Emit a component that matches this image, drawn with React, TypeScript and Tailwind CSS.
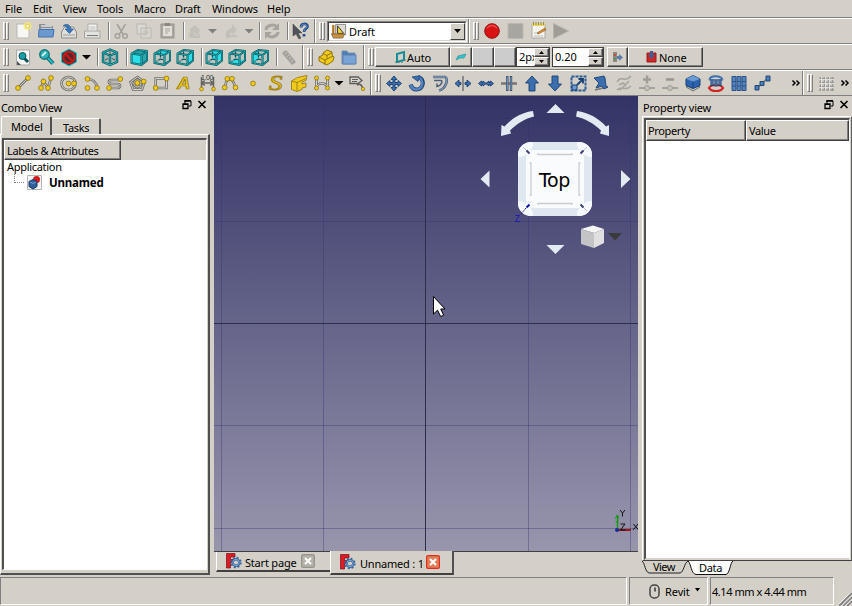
import type { ReactNode } from "react";

const YEL = "#f0cb1e";
const YEL_D = "#8f740c";
const BLUE = "#3d6fae";
const BLUE_D = "#173f72";
const TEAL = "#22c3cb";
const TEAL_D = "#0b5258";

/* ---------- toolbar primitives ---------- */

function Toolbar({ children }: { children: ReactNode }) {
  return (
    <div className="flex h-[26px] shrink-0 items-stretch border-t border-b border-t-white border-b-[#808080]">
      {children}
    </div>
  );
}

function Grip({ width = "w-[12px]" }: { width?: string }) {
  return (
    <div className={`flex ${width} shrink-0 items-center pl-[3px]`}>
      <span className="h-[18px] w-[3px] shrink-0 border border-t-white border-r-[#808080] border-b-[#808080] border-l-white" />
      <span className="h-[18px] w-[3px] shrink-0 border border-t-white border-r-[#808080] border-b-[#808080] border-l-white" />
    </div>
  );
}

function Break({ className = "" }: { className?: string }) {
  return <div className={`w-[2px] shrink-0 border-l border-l-[#808080] bg-white ${className}`} />;
}

function Sep() {
  return (
    <div className="flex w-[6px] shrink-0 items-center justify-end">
      <span className="h-[18px] w-[2px] border-l border-l-[#808080] bg-white" />
    </div>
  );
}

function Icon({ children, width = 23 }: { children: ReactNode; width?: number }) {
  return (
    <svg className="shrink-0" width={width} height="24" viewBox={`0 0 ${width} 24`} fill="none">
      {children}
    </svg>
  );
}

function Drop({ width, color = "#000" }: { width: number; color?: string }) {
  return (
    <svg className="shrink-0" width={width} height="24" viewBox={`0 0 ${width} 24`}>
      <path d={`M${width / 2 - 4.5} 10h9l-4.5 4.5z`} fill={color} />
    </svg>
  );
}

/* Yellow nodes joined by a grey outlined stroke, used by all the Draft tools */
function Nodes({ d, pts, width = 23, r = 2.4 }: { d?: string; pts: number[][]; width?: number; r?: number }) {
  return (
    <Icon width={width}>
      {d && <path d={d} stroke="#6f6f6c" strokeWidth="2.6" />}
      {d && <path d={d} stroke="#d2d0ca" strokeWidth="1" />}
      {pts.map(([x, y]) => (
        <circle key={`${x}-${y}`} cx={x} cy={y} r={r} fill={YEL} stroke={YEL_D} strokeWidth="0.8" />
      ))}
    </Icon>
  );
}

function CubeIcon({ face }: { face: "axo" | "front" | "top" | "right" | "rear" | "bottom" | "left" }) {
  if (face === "axo") {
    const edges = "M11 4.500l7 3v9.500l-7 3-7-3V7.500zM4 7.500l7 3 7-3M11 10.500V20";
    return (
      <Icon>
        <path d={edges} fill="#a9bab8" stroke={TEAL_D} strokeWidth="2.4" strokeLinejoin="round" />
        <path d={edges} stroke={TEAL} strokeWidth="0.900" />
        <path d="M11 6v5M6 15l3-1.500M16 15l-3-1.500" stroke="#3c4f50" strokeWidth="1" />
      </Icon>
    );
  }
  const front = "M3.500 8.500l10 1.500v10L3.500 18z";
  const top = "M3.500 8.500l6-3.500 9.500 1-5.500 4z";
  const right = "M13.500 10l5.500-4v9.500l-5.500 4.500z";
  const rear = "M9.500 5l9.500 1v9.500L9.500 14z";
  const bottom = "M3.500 18l6-4 9.500 1.500-5.500 4.500z";
  const left = "M3.500 8.500l6-3.500v9l-6 4z";
  const fill = { front, top, right, rear, bottom, left }[face];
  const edges = "M3.500 8.500l6-3.500 9.500 1v9.500L13.500 20l-10-2zM3.500 8.500l10 1.500v10M13.500 10l5.500-4";
  return (
    <Icon>
      <path d="M3.500 8.500l6-3.500 9.500 1v9.500L13.500 20l-10-2z" fill={face === "front" ? "#28a9b0" : "#b9c6c2"} />
      <path d={fill} fill="#2ce0ea" />
      {face !== "front" && <path d="M9.500 6.500v7.500M9.500 14l-4 2.500M9.500 14l4 1" stroke={TEAL_D} strokeWidth="1.200" strokeDasharray="2.500 1" />}
      <path d={edges} stroke={TEAL_D} strokeWidth="2" strokeLinejoin="round" />
      <path d={edges} stroke={TEAL} strokeWidth="0.700" strokeLinejoin="round" />
    </Icon>
  );
}

function Blue({ d, stroke }: { d: string; stroke?: string }) {
  return (
    <Icon>
      {stroke && <path d={stroke} stroke="#77777a" strokeWidth="1.6" />}
      <path d={d} fill={BLUE} stroke={BLUE_D} strokeWidth="0.9" strokeLinejoin="round" />
    </Icon>
  );
}

function Chevrons() {
  return (
    <svg width="10" height="24" viewBox="0 0 10 24" fill="none" className="shrink-0">
      <path d="M1.500 9.500l2.500 2.500-2.500 2.500M5.500 9.500L8 12l-2.500 2.500" stroke="#000" strokeWidth="1.500" />
    </svg>
  );
}

/* ---------- rows ---------- */

function MenuBar() {
  const items: [string, string][] = [
    ["File", "w-[28px]"], ["Edit", "w-[30px]"], ["View", "w-[34px]"], ["Tools", "w-[37px]"],
    ["Macro", "w-[41px]"], ["Draft", "w-[37px]"], ["Windows", "w-[55px]"], ["Help", "w-[30px]"],
  ];
  return (
    <div className="flex h-[18px] shrink-0 items-center border-b border-b-[#808080] pl-[5px] tracking-[-0.15px]">
      {items.map(([t, w]) => <span key={t} className={`${w} whitespace-nowrap`}>{t}</span>)}
    </div>
  );
}

function FileBar() {
  return (
    <Toolbar>
      <Grip />
      <Icon>
        <path d="M5 5h12v14H5z" fill="#f7f7f5" stroke="#b9b9b4" />
        <circle cx="15.500" cy="7" r="4" fill="#f6e878" opacity="0.8" /><circle cx="15.500" cy="7" r="1.800" fill="#fff" stroke="#e5c93a" />
      </Icon>
      <Icon>
        <path d="M4 5h6l1 2h7v10H4z" fill="#8c8f92" /><path d="M6 6h11v6H6z" fill="#c9cdd0" /><path d="M6 8.500h11" stroke="#8c8f92" />
        <path d="M3.500 18l.5-7.500h15l-1 7.500z" fill="#6b9ad0" stroke="#4273ad" />
      </Icon>
      <Icon>
        <path d="M3.500 13l3-5h9l3 5v6h-15z" fill="#dfdfdc" stroke="#8a8a88" /><path d="M5 16h12" stroke="#9b9b99" />
        <path d="M5 7c3-3 7-2 8 3h2.500l-4 4.500L7 10h2.500C9 7.500 7 6.500 5 7z" fill="#3b76b8" stroke="#285a94" strokeWidth="0.600" />
      </Icon>
      <Icon>
        <path d="M7 5h9v8H7z" fill="#f4f4f2" stroke="#aaa" /><path d="M8.500 8h6M8.500 10h6" stroke="#bbb" />
        <path d="M3.500 12h15.500v7H3.500z" fill="#e2e2df" stroke="#a5a5a1" /><path d="M6 16.500h11" stroke="#777" />
      </Icon>
      <Sep />
      <Icon>
        <g stroke="#a3a19c" strokeWidth="1.500"><path d="M7 5l6 10M15.500 5L9.500 15" /><circle cx="7.500" cy="17" r="2.300" /><circle cx="15" cy="17" r="2.300" /></g>
      </Icon>
      <Icon><g fill="#dad8d2" stroke="#b9b6af"><path d="M4 5h9v10H4zM8 9h10v10H8z" /></g><path d="M10 12h6M10 14h6M10 16h5" stroke="#bfbcb5" /></Icon>
      <Icon>
        <path d="M5 5h13v14H5z" fill="#aaa79f" stroke="#98958e" /><path d="M7 7h9v10H7z" fill="#e0ded8" /><path d="M9 4h5v3H9z" fill="#88867f" />
        <path d="M9 10h5M9 12h5M9 14h3" stroke="#aaa79f" />
      </Icon>
      <Sep />
      <Icon width={20}><path d="M4 17c1-5 2-5 1-7l5-4 6 6-3 1c2 2 2 4 2 6H5z" fill="#c3c0b9" /><path d="M9 14l4 3" stroke="#d8d5ce" /></Icon>
      <Drop width={15} color="#808080" />
      <Icon><path d="M6 19c-1-6 1-9 6-10V5l5 6-5 5v-3c-2 1-3 3-2 6z" fill="#c3c0b9" /><path d="M6 17h11" stroke="#c3c0b9" strokeWidth="2" /></Icon>
      <Drop width={12} color="#808080" />
      <Sep />
      <Icon width={22}>
        <path d="M5 11c0-4 7-7 11-3M17 13c0 4-7 7-11 3" stroke="#a7a49d" strokeWidth="3" /><path d="M18 4v7h-7zM4 20v-7h7z" fill="#a7a49d" />
      </Icon>
      <Sep />
      <Icon width={25}>
        <path d="M4 5v12l3-2 3 5 2-1-3-5h4z" fill="#50545a" stroke="#3c3f43" strokeWidth="0.500" />
        <path d="M12 8.500c0-5 7-4.500 6.500-1 0 2.500-3.500 2-3.500 5.500M15 15v2.500" stroke="#204a87" strokeWidth="2.700" />
        <path d="M12 8.500c0-4.500 6.300-4 6-1 0 2.500-3 2-3 5" stroke="#7fa4d3" strokeWidth="0.800" />
      </Icon>
      <Break />
      <Grip width="w-[11px]" />
      <div className="flex h-[21px] w-[140px] shrink-0 items-center self-center border border-t-[#808080] border-r-white border-b-white border-l-[#808080] bg-white">
        <div className="flex h-full w-full items-center border border-t-[#404040] border-r-[#d4d0c8] border-b-[#d4d0c8] border-l-[#404040]">
          <svg width="19" height="17" viewBox="0 0 19 18" className="shrink-0">
            <path d="M6.500 1.500h10.500v11h-10.500z" fill="#dedbd5" stroke="#888" /><path d="M8.500 11V3l6.500 8z" fill="#f2d632" stroke="#333" />
            <path d="M4 2v11" stroke="#b77822" strokeWidth="2.500" /><path d="M2 11.500h14l-2 4.500H4z" fill="#c69045" stroke="#73532a" strokeWidth="0.700" />
          </svg>
          <span className="flex-1 pl-[1px] tracking-[-0.1px]">Draft</span>
          <span className="flex h-[17px] w-[15px] items-center justify-center border border-t-white border-r-[#404040] border-b-[#404040] border-l-white bg-[#d4d0c8]">
            <svg width="7" height="4" viewBox="0 0 7 4"><path d="M0 0h7L3.500 4z" /></svg>
          </span>
        </div>
      </div>
      <Break className="ml-px" />
      <Grip width="w-[11px]" />
      <Icon><circle cx="11" cy="12" r="7.300" fill="#d81414" stroke="#8e1111" /><path d="M6 9.500c2-4 8-4 10 0" stroke="#ef4545" strokeWidth="1.500" /></Icon>
      <Icon><path d="M4 4.500h15v15H4z" fill="#a8a6a1" stroke="#bab7b0" /></Icon>
      <Icon>
        <path d="M5 5h13v14H5z" fill="#f5f4ee" stroke="#aaa" /><path d="M5 4h13v3H5z" fill="#ead55c" /><path d="M6.500 3v3M9 3v3M11.500 3v3M14 3v3M16.500 3v3" stroke="#777" strokeWidth="0.800" />
        <path d="M7 14h6M7 17h9" stroke="#bbb" /><path d="M10 14l8-5 1 2-8 4z" fill="#e29131" stroke="#86521b" strokeWidth="0.600" />
      </Icon>
      <Icon><path d="M3.500 4.500l15 7.500-15 7.500z" fill="#a09d97" stroke="#b5b2ab" /></Icon>
    </Toolbar>
  );
}

const raised = "border border-t-white border-l-white border-r-[#404040] border-b-[#404040] shadow-[inset_-1px_-1px_0_#808080]";

function Spin({ value, width, text }: { value: string; width: string; text: string }) {
  return (
    <div className={`flex h-[20px] ${width} shrink-0 self-center border border-[#404040] bg-white`}>
      <span className={`${text} shrink-0 overflow-hidden whitespace-nowrap pl-[2px] leading-[18px] tracking-normal`}>{value}</span>
      <span className="flex flex-1 flex-col bg-[#d4d0c8]">
        {["M0 3h5L2.500 0z", "M0 0h5L2.500 3z"].map((d) => (
          <span key={d} className={`flex flex-1 items-center justify-center ${raised}`}>
            <svg width="5" height="3" viewBox="0 0 5 3"><path d={d} /></svg>
          </span>
        ))}
      </span>
    </div>
  );
}

function ViewBar() {
  return (
    <Toolbar>
      <Grip />
      <Icon>
        <path d="M4.500 5h13v15h-13z" fill="#f6f6f4" stroke="#aaa" /><path d="M5 16l4 4H5z" fill="#555" />
        <path d="M12 13l4 4" stroke={TEAL_D} strokeWidth="3" /><circle cx="10.500" cy="11" r="3.500" fill="#1a9fa8" stroke={TEAL_D} />
      </Icon>
      <Icon>
        <path d="M12 12l6 6.500" stroke={TEAL_D} strokeWidth="4" /><path d="M12 12l6 6.500" stroke={TEAL} strokeWidth="2" />
        <circle cx="9.500" cy="9.500" r="4.700" fill="#2bb0b8" stroke="#14767d" strokeWidth="1.500" /><path d="M7 11l4-4" stroke="#d8f2f2" strokeWidth="1.800" />
      </Icon>
      <Icon>
        <path d="M11 4l7.500 4v9l-7.500 4-7.500-4V8z" fill={TEAL_D} stroke={TEAL} strokeWidth="0.900" />
        <circle cx="11" cy="12.500" r="5.600" stroke="#c81818" strokeWidth="2.200" fill="#55292b" /><path d="M7 8.500l8 8" stroke="#c81818" strokeWidth="2.400" />
      </Icon>
      <Drop width={11} />
      <div className="w-px" />
      <Sep />
      <CubeIcon face="axo" />
      <Sep />
      <CubeIcon face="front" /><CubeIcon face="top" /><CubeIcon face="right" />
      <Sep />
      <CubeIcon face="rear" /><CubeIcon face="bottom" /><CubeIcon face="left" />
      <Sep />
      <Icon><path d="M4 8l4-3 10 12-4 3z" fill="#a09e99" stroke="#bab7b0" /><path d="M7 9l2-1.500M9 11.500l2-1.500M11 14l2-1.500M13 16.500l2-1.500" stroke="#d4d0c8" /></Icon>
      <Break className="ml-px" />
      <Grip width="w-[11px]" />
      <Icon>
        <path d="M4 12l4-2V8l4-3 5 2v3l2 2-1 4-6 4-8-4z" fill={YEL} stroke={YEL_D} /><path d="M4 12l6 3 8-4M10 15v5M8 8.500l4 2 5-3M12 10.500v3" stroke={YEL_D} />
      </Icon>
      <Icon><path d="M4 6h5l1 2h7v11H4z" fill="#4d7db7" stroke="#7490b2" /><path d="M5 10h13v9H5z" fill="#79a3d5" stroke="#5c83b3" /></Icon>
      <Break className="ml-[2px]" />
      <Grip width="w-[10px]" />
      <div className={`flex h-[20px] w-[75px] shrink-0 self-center ${raised} items-center pl-[18px] tracking-[-0.1px]`}>
        <svg width="13" height="14" viewBox="0 0 13 14" fill="none"><path d="M3 4l7-2v8l-7 2z" stroke="#148f98" strokeWidth="2" /><path d="M1 12h8M11 9v3" stroke="#577" strokeDasharray="2 1" /></svg>
        Auto
      </div>
      <div className={`flex h-[20px] w-[22px] shrink-0 items-center justify-center self-center ${raised}`}>
        <svg width="12" height="8" viewBox="0 0 12 8"><path d="M1 7l2-4 8-2-2 4-4 0z" fill="#35c3cd" stroke="#26959e" strokeWidth="0.700" /></svg>
      </div>
      <div className={`h-[20px] w-[22px] shrink-0 self-center bg-[#cccccc] ${raised}`} />
      <div className={`h-[20px] w-[22px] shrink-0 self-center bg-[#cccccc] ${raised}`} />
      <Spin value="2px" width="w-[34px]" text="w-[17px]" />
      <div className="w-[2px]" />
      <Spin value="0.20" width="w-[52px]" text="w-[35px]" />
      <div className="w-[3px]" />
      <div className={`flex h-[20px] w-[21px] shrink-0 items-center justify-center self-center ${raised}`}>
        <svg width="12" height="12" viewBox="0 0 12 12"><path d="M1 1h4v10H1z" fill="#8b8882" /><path d="M2 3h2v2H2z" fill="#c94d3a" /><path d="M2 7h2v2H2z" fill="#5a9450" /><path d="M5 5h2V3l4 3.500L7 10V8H5z" fill="#5c7ea8" /></svg>
      </div>
      <div className={`flex h-[20px] w-[75px] shrink-0 self-center ${raised} items-center pl-[17px] tracking-[-0.1px]`}>
        <svg width="11" height="12" viewBox="0 0 11 12" className="mr-[2px]"><path d="M1 2h9v9H1z" fill="#d12626" stroke="#9b1919" /><path d="M4 0h3v4h2L5.500 8 2 4h2z" fill="#3e5f96" /></svg>
        None
      </div>
    </Toolbar>
  );
}

function DraftBar() {
  return (
    <Toolbar>
      <Grip />
      <Nodes d="M6 17L16 7" pts={[[6, 17], [16, 7]]} />
      <Nodes d="M6 17L8.500 10 13 17 16 7" pts={[[6, 17], [8.5, 10.5], [13, 17], [16, 7]]} />
      <Nodes d="M17.500 12.500a7 6.500 0 1 0-14 0a7 6.500 0 1 0 14 0" pts={[[10.5, 12.5], [16, 12.5]]} />
      <Nodes d="M6.500 8c5 0 9 3 9.500 9" pts={[[6.5, 8], [6.5, 17], [16, 17]]} />
      <Nodes d="M5 17h8c4 0 4-4 1-4H8c-4 0-4-4-1-4h9" pts={[[16.3, 8], [5, 17]]} />
      <Nodes d="M10.500 6l7 5-2.500 7.500H6L3.500 11z M10.500 9a3.500 3.500 0 1 1-.1 0" pts={[[10.3, 12], [16.7, 10.5]]} />
      <Nodes d="M5.700 7.500H16.500V17H5.700z" pts={[[16.5, 7.5], [5.7, 17]]} />
      <Icon>
        <text x="4" y="18" fontSize="16" textLength="13" lengthAdjust="spacingAndGlyphs" fontWeight="bold" fontStyle="italic" fill={YEL} stroke={YEL_D} strokeWidth="0.700" className="font-['Liberation_Sans',sans-serif]">A</text>
      </Icon>
      <Icon>
        <path d="M5.500 6v12M17.500 6v12M5 12h13M9 9.500L5.500 12 9 14.500M14 9.500l3.500 2.500-3.500 2.500" stroke="#666663" strokeWidth="1.500" />
        <text x="5" y="9" fontSize="7" textLength="12" fill="#333" className="font-['Liberation_Sans',sans-serif]">1.00</text>
        <circle cx="5.500" cy="18" r="1.900" fill={YEL} stroke={YEL_D} strokeWidth="0.700" /><circle cx="17.500" cy="18" r="1.900" fill={YEL} stroke={YEL_D} strokeWidth="0.700" />
      </Icon>
      <Nodes d="M5.700 16.500c2-11 8-11 10.500 0" pts={[[5.7, 16.5], [8.3, 7.8], [13, 7.8], [16.5, 16.5]]} />
      <Nodes pts={[[11, 12.5]]} />
      <Icon><text x="4" y="18.500" fontSize="20" textLength="13" lengthAdjust="spacingAndGlyphs" fontStyle="italic" fill={YEL} stroke="#a3850f" strokeWidth="0.900" className="font-['Liberation_Serif',serif]">S</text></Icon>
      <Icon><path d="M3.500 10l6-3.500 9.500-2-1 5-4 1.500v2l4-1v4l-4 1v1.500l-5 2-5.500-2z" fill={YEL} stroke={YEL_D} strokeWidth="0.800" /><path d="M3.500 10l5.500 1.500v8.500M9 11.500l9-4" stroke={YEL_D} strokeWidth="0.800" /></Icon>
      <Nodes d="M5.500 7v10c0-6 11-6 11 0V7" pts={[[5.5, 7], [16.5, 7], [5.5, 17], [16.5, 17]]} width={22} r={2} />
      <Drop width={12} />
      <Icon>
        <path d="M5 6h8l4 3.500-4 3H5z" fill="#d7d5ce" stroke="#5d5c59" strokeWidth="1.300" /><path d="M7 8.500h6M7 10.500h5" stroke="#5d5c59" />
        <path d="M12 14c4-2 5 1 6 4" stroke="#5d5c59" strokeWidth="1.500" /><circle cx="18" cy="18" r="1.700" fill={YEL} stroke={YEL_D} strokeWidth="0.700" />
      </Icon>
      <Break className="ml-[2px]" />
      <Grip />
      <Blue d="M10 5l3 3.500h-2v3h3v-2l3.500 3-3.500 3v-2h-3v3h2L10 20l-3-3.500h2v-3H6v2l-3.500-3 3.500-3v2h3v-3H7z" />
      <Icon>
        <path d="M12.500 6.500c6 4 3 12-3 12-3 0-5-2-6-5" stroke={BLUE_D} strokeWidth="4" /><path d="M12 6.500c6 4 3 12-2.500 12-3 0-5-2-6-5" stroke="#5483bf" strokeWidth="2.500" /><path d="M5 6l8-1.500-2 6z" fill={BLUE} stroke={BLUE_D} strokeWidth="0.700" />
      </Icon>
      <Icon>
        <path d="M3 6h12c4 1 1 12-6 13.500" stroke="#4d5f77" strokeWidth="2.600" /><path d="M3 6h12c4 1 1 12-6 13.500" stroke="#93b5e0" strokeWidth="0.900" /><path d="M4 9.500h7c2 0 1 5-4 6v-3" stroke="#4d5f77" strokeWidth="1.500" />
      </Icon>
      <Blue stroke="M10 5v15" d="M2 12.500l4-3.500v2.500h2v2H6V16zM18 12.500L14 9v2.500h-2v2h2V16z" />
      <Blue stroke="M4 12.500h13" d="M2.500 12.500l3-2.500v1.500h1.500V10l3 2.500-3 2.500v-1.500H5.500V15zM17.500 12.500l-3-2.500v1.500H13V10l-3 2.500 3 2.500v-1.500h1.500V15z" />
      <Icon><path d="M2 12.500h16" stroke="#777" strokeWidth="2.500" /><path d="M8.300 5v15M12 5v15" stroke="#3b506b" strokeWidth="2.400" /><path d="M8.300 6v13M12 6v13" stroke="#87a4c8" strokeWidth="0.900" /></Icon>
      <Blue d="M10 5l6.500 7H13v8H7v-8H3.500z" />
      <Blue d="M10 20l6.500-7H13V5H7v8H3.500z" />
      <Icon>
        <path d="M3.500 5.500h14v14h-14z" stroke="#2d5c96" strokeWidth="2" strokeDasharray="3 1" /><path d="M4 14h5v5H4z" fill="#6d99d2" stroke={BLUE_D} /><path d="M9 14l5-5M10.500 8H15v4.500" stroke={BLUE_D} strokeWidth="1.800" />
      </Icon>
      <Blue d="M3 7l10-2 1 2 1 8 2 1-4 2-2-3-6 2 3-5z" stroke="M4 19l12-3" />
      <Icon><g stroke="#a7a49d" strokeWidth="1.600"><path d="M3 11c5-8 7 2 14-6M3 19c6-5 8 2 14-4M5 14l4-2 3 3M15 10l-9 9" /></g></Icon>
      <Icon><g stroke="#a09d97" strokeWidth="2.500"><path d="M6 8.500h8M10 4.500v8" /><path d="M2 17h16" strokeWidth="1.800" /></g><circle cx="10" cy="17" r="2.500" fill="#c4c1b9" stroke="#a09d97" /></Icon>
      <Icon><path d="M6 8.500h8" stroke="#999690" strokeWidth="2.500" /><path d="M2 17h16" stroke="#a09d97" strokeWidth="1.800" /><circle cx="10" cy="17" r="2.500" fill="#c4c1b9" stroke="#a09d97" /></Icon>
      <Icon><path d="M3 16l7-3 7 3-7 4z" fill="#bbb" stroke="#777" /><path d="M3 8l7-3.500 7 3.500v6.500l-7 3-7-3z" fill="#2c64ae" stroke={BLUE_D} /><path d="M3 8l7-3.500 7 3.500-7 2.500z" fill="#6a9ad3" /><path d="M10 11v6" stroke={BLUE_D} /></Icon>
      <Icon>
        <path d="M3.500 9c0-5 12-5 13 0" stroke={BLUE} strokeWidth="2" /><path d="M3 9h14" stroke="#6d8db5" strokeWidth="1.500" /><path d="M3 17c2-4 12-4 14 0-2 4-12 4-14 0z" stroke="#cf2525" strokeWidth="2.200" /><path d="M6 8v7M10 8.500v7M14 8v7" stroke={BLUE_D} strokeWidth="3" /><path d="M6 8v6M10 8.500v6M14 8v6" stroke="#6d99d2" strokeWidth="1" />
      </Icon>
      <Icon>
        {[3, 8, 13].map((x) => <path key={x} d={`M${x} 5.500h4v14h-4zM${x} 10.500h4M${x} 15h4`} fill="#5583bb" stroke="#2b5288" />)}
      </Icon>
      <Icon>
        <path d="M4 18L16 7" stroke="#777" strokeWidth="1.500" /><path d="M3 14.500h4v4.500H3zM8 10.500h4v4H8zM14 5h4v5h-4z" fill="#4b7cb8" stroke={BLUE_D} strokeWidth="0.900" />
      </Icon>
      <div className="w-[16px]" />
      <Chevrons />
      <div className="w-px" />
      <Break />
      <Grip />
      <Icon><g stroke="#9b9994" strokeWidth="1.300"><path d="M3 7.500h15M3 11.500h15M3 15.500h15M3 19h15M4.500 6v14M8.500 6v14M12.500 6v14M16.500 6v14" /></g><g stroke="#eee" strokeWidth="0.700"><path d="M3 8.500h15M3 12.500h15M3 16.500h15M5.500 6v14M9.500 6v14M13.500 6v14" /></g></Icon>
      <div className="w-px" />
      <Chevrons />
    </Toolbar>
  );
}

/* ---------- docks ---------- */

function DockTitle({ title, className }: { title: string; className: string }) {
  return (
    <div className={`flex h-[20px] shrink-0 items-center ${className}`}>
      <span className="flex-1 pt-[2px]">{title}</span>
      <svg width="25" height="10" viewBox="0 0 25 10" fill="none" className="mb-[3px]">
        <path d="M3 0v2M3 1h6v5H7M3 1v3" stroke="#000" /><path d="M2.500 .75h6.500" stroke="#000" strokeWidth="1.500" />
        <path d="M1 4h5v4.500H1zM1 4.300h5" stroke="#000" strokeWidth="1.300" />
        <path d="M16.500 1l7 7M23.500 1l-7 7" stroke="#000" strokeWidth="1.600" />
      </svg>
    </div>
  );
}

function ComboView() {
  return (
    <div className="flex w-[210px] shrink-0 flex-col">
      <DockTitle title="Combo View" className="pl-[1px] pr-[3px]" />
      <div className="flex h-[18px] shrink-0 items-end pl-[1px]">
        <div className="z-10 -mb-px flex h-[19px] w-[51px] items-center rounded-t-[2px] border-t border-r-2 border-l border-t-white border-r-[#505050] border-l-white bg-[#d4d0c8] pl-[9px] tracking-[-0.15px]">Model</div>
        <div className="flex h-[16px] w-[49px] items-center rounded-t-[2px] border-t border-r-2 border-t-white border-r-[#505050] pl-[11px] pt-px">Tasks</div>
      </div>
      <div className="h-[441px] border-t border-r-2 border-b-2 border-l border-t-white border-r-[#505050] border-b-[#505050] border-l-white p-px pt-[3px] pb-[3px]">
        <div className="flex h-full flex-col border-t-2 border-r border-b border-l-2 border-t-[#505050] border-r-white border-b-white border-l-[#505050] bg-white">
          <div className="flex h-[20px] shrink-0 bg-[#d4d0c8]">
            <div className={`flex w-[117px] items-center pl-[2px] ${raised}`}>Labels &amp; Attributes</div>
          </div>
          <div className="h-[14px] pl-[3px] leading-[14px] tracking-[-0.3px]">Application</div>
          <div className="flex h-[16px] items-center pl-[10px]">
            <div className="mb-[8px] h-[9px] w-[10px] border-b border-l border-dotted border-[#808080]" />
            <svg width="15" height="15" viewBox="0 0 15 15" className="ml-[3px] shrink-0">
              <path d="M.5.5h14v14H.5z" fill="#f4f4f4" stroke="#b5b5b5" /><circle cx="9.500" cy="4.500" r="3.500" fill="#d31919" />
              <path d="M2 6.500l4-2 4 2v5l-4 2.500-4-2.500z" fill="#2f609d" stroke="#163960" /><path d="M3 7l3 1.500L9 7" stroke="#6d98cd" fill="none" />
            </svg>
            <span className="ml-[7px] text-[11.5px] font-bold tracking-[-0.2px]">Unnamed</span>
          </div>
        </div>
      </div>
    </div>
  );
}

const GRID = [118, 221, 425, 528];

function Viewport() {
  return (
    <svg width="424" height="455" viewBox="214 96 424 455" fill="none" className="shrink-0">
      <defs>
        <linearGradient id="sky" x1="0" y1="0" x2="0" y2="1"><stop offset="0" stopColor="#333366" /><stop offset="1" stopColor="#9896ad" /></linearGradient>
        <clipPath id="cube"><rect x="518" y="142" width="74" height="74" rx="13" /></clipPath>
      </defs>
      <path d="M214 96h424v455H214z" fill="url(#sky)" />
      <g stroke="#33336e" strokeOpacity="0.38" shapeRendering="crispEdges">
        {GRID.map((y) => <path key={y} d={`M214 ${y + 0.5}h424`} />)}
        {[221, 323, 528, 630].map((x) => <path key={x} d={`M${x + 0.5} 96v455`} />)}
      </g>
      <path d="M425.500 96v455M214 323.500h424" stroke="#2e2d4c" shapeRendering="crispEdges" />

      <g fill="#e2eaf2">
        <path d="M555.500 104l9 9h-18zM555.500 254l9-9h-18zM480.500 179l9-8.500v17zM630.500 179l-9.500-9v18z" />
        <path d="M533 111l1 5.500c-9 2-17 7-24 14l1 3-10 2.500.5-11 3 1.500c7-8 17-14 28.500-15.500z" />
        <path d="M577 111l-1 5.500c9 2 18 7 25 14l-1 3 9 2.500V125l-3 1.500c-7-8-17.500-14-29-15.500z" />
      </g>
      <g clipPath="url(#cube)">
        <path d="M518 142h74v74h-74z" fill="#dfe8f0" />
        <g fill="#f7fafc"><ellipse cx="525" cy="149" rx="10" ry="5" transform="rotate(-45 525 149)" /><ellipse cx="585" cy="149" rx="10" ry="5" transform="rotate(45 585 149)" /><ellipse cx="525" cy="209" rx="10" ry="5" transform="rotate(45 525 209)" /><ellipse cx="585" cy="209" rx="10" ry="5" transform="rotate(-45 585 209)" /></g>
      </g>
      <rect x="526" y="150" width="58" height="58" rx="6" fill="#f9fbfd" />
      <path d="M523 147l4 4M587 147l-4 4M587 211l-4-4" stroke="#b9bfca" /><path d="M526.500 150.500l3 3M583.500 150.500l-3 3M583.500 207.500l-3-3" stroke="#3f4078" strokeWidth="2" />
      <path d="M538 153v1.500h34V153M538 205v-1.500h34v1.500M529.500 163h1.500v32h-1.500M580.500 163H579v32h1.500" stroke="#c9cdd2" strokeWidth="1.300" />
      <text x="539" y="186.500" fontSize="19" textLength="31" fill="#000" className="font-['DejaVu_Sans',sans-serif]">Top</text>
      <path d="M529.500 204.500l-3 3" stroke="#1414a8" strokeWidth="2" /><path d="M526 208l-5 6" stroke="#1f1f80" strokeDasharray="2 1" />
      <path d="M515.500 215.500h4l-4 6h5" stroke="#1c1cb0" />

      <path d="M581 229l12-3.500 11 3.500-10 4z" fill="#f5f5f5" /><path d="M581 229l13 4v15l-13-4z" fill="#c4c4c6" /><path d="M594 233l10-4v14l-10 5z" fill="#e0e0e0" />
      <path d="M608 233h14l-7 7.500z" fill="#3b3b3b" />

      <path d="M617.500 515v14" stroke="#149a14" strokeWidth="1.500" /><path d="M615.500 518.500l1.500-3.500 2 3.500M615.500 522h3" stroke="#149a14" /><path d="M618 530h13" stroke="#a01414" strokeWidth="2" /><circle cx="617" cy="530" r="2" fill="#1b2a9c" />
      <path d="M620 510l2.500 3v3.500M625 510l-2.500 3M620.500 524h4.500l-4.500 6h5M633.500 524l5 6M638 524l-5 6" stroke="#111" />

      <path d="M433.500 296.500v17.500l4-3.800 3.200 6.300 3-1.300-3-6.200h4.300z" fill="#fff" stroke="#000" />
    </svg>
  );
}

function AppIcon() {
  return (
    <svg width="16" height="16" viewBox="0 0 16 16" fill="none" className="shrink-0">
      <path d="M.5 .5h8.500v3.500H4.500v2.500h3v3h-3v5.500h-4z" fill="#dc1b22" stroke="#721218" strokeWidth="0.700" />
      <circle cx="10" cy="9.500" r="3.300" stroke="#34639b" strokeWidth="2.400" /><circle cx="10" cy="9.500" r="5" stroke="#34639b" strokeWidth="1.400" strokeDasharray="2 1.930" /><circle cx="10" cy="9.500" r="3.200" stroke="#8aadd6" strokeWidth="0.900" />
    </svg>
  );
}

function CloseBox({ active }: { active?: boolean }) {
  return (
    <svg width="14" height="14" viewBox="0 0 14 14" className="shrink-0">
      <rect x="0.600" y="0.600" width="12.800" height="12.800" rx="1.500" fill={active ? "#e0805a" : "#b5b2aa"} stroke={active ? "#e02a1c" : "#96938b"} strokeWidth="1.200" />
      <path d="M4 4l6 6M10 4l-6 6" stroke="#fff" strokeWidth="2" />
    </svg>
  );
}

function Center() {
  return (
    <div className="ml-[4px] flex w-[424px] shrink-0 flex-col">
      <Viewport />
      <div className="flex h-[24px] items-start border-t border-t-[#404040] pl-[2px]">
        <div className="flex h-[20px] w-[114px] items-center border-b-2 border-l border-b-[#404040] border-l-white pl-[9px]">
          <AppIcon /><span className="w-[59px] pl-[3px] pt-[2px] tracking-[-0.2px] whitespace-nowrap">Start page</span><CloseBox />
        </div>
        <div className="-mt-px flex h-[24px] w-[124px] items-center border-r-2 border-b-2 border-l border-r-[#505050] border-b-[#404040] border-l-white bg-[#d4d0c8] pl-[9px]">
          <AppIcon /><span className="w-[70px] pl-[4px] pt-[2px] whitespace-nowrap tracking-[-0.2px]">Unnamed : 1</span><CloseBox active />
        </div>
      </div>
    </div>
  );
}

function PropertyView() {
  return (
    <div className="flex flex-1 flex-col pl-[4px]">
      <DockTitle title="Property view" className="pl-[1px] pr-[3px] tracking-[-0.2px]" />
      <div className="h-[445px] border border-t-white border-l-white border-b-[#404040] border-r-[#606060] p-px pb-0">
        <div className="flex h-full flex-col border-t-2 border-r border-b-2 border-l-2 border-t-[#505050] border-r-white border-b-[#d4d0c8] border-l-[#505050] bg-white">
          <div className="flex h-[21px] shrink-0 bg-[#d4d0c8]">
            <div className={`flex w-[100px] items-center pl-[1px] ${raised}`}>Property</div>
            <div className={`flex flex-1 items-center pl-[2px] ${raised}`}>Value</div>
          </div>
        </div>
      </div>
      <svg width="210" height="15" viewBox="0 0 210 15" className="shrink-0">
        <path d="M0 0c3 2 3 11 7 12h31c4-1 4-10 8-12" fill="#d4d0c8" stroke="#222" />
        <path d="M46 0c3 2 3 13 8 13.500h30c4-1 4-12 7-13.500" fill="#fff" stroke="#111" />
        <text x="11" y="10" fontSize="11" textLength="22">View</text>
        <text x="57" y="11" fontSize="11" textLength="23">Data</text>
      </svg>
    </div>
  );
}

function StatusBar() {
  const pane = "flex h-[28px] shrink-0 items-center border border-t-[#808080] border-l-[#808080] border-r-white border-b-white";
  return (
    <div className="flex h-[30px] shrink-0 items-start pt-px">
      <div className={`${pane} w-[627px]`} />
      <div className={`${pane} ml-[2px] w-[79px] pl-[19px]`}>
        <svg width="11" height="15" viewBox="0 0 11 15" fill="none" className="shrink-0"><rect x="1" y="1" width="9" height="13" rx="4" stroke="#444" strokeWidth="1.500" /><path d="M6 3.500v4" stroke="#333" strokeWidth="1.500" /></svg>
        <span className="w-[35px] shrink-0 pl-[5px] whitespace-nowrap tracking-[-0.1px]">Revit</span>
        <svg width="5" height="4" viewBox="0 0 5 4" className="mb-[2px] shrink-0"><path d="M0 0h5L2.500 3.500z" /></svg>
      </div>
      <div className={`${pane} ml-[2px] w-[124px] pl-[1px] whitespace-nowrap tracking-[-0.45px]`}>4.14 mm x 4.44 mm</div>
      <svg width="13" height="13" viewBox="0 0 13 13" fill="none" className="mt-[16px] ml-auto">
        <path d="M0 13L13 0M4 13l9-9M8 13l5-5" stroke="#808080" strokeWidth="1.800" /><path d="M-1 12L12-1M2.500 13L13 2.500M6.500 13L13 6.500" stroke="#fff" strokeWidth="0.800" />
      </svg>
    </div>
  );
}

export default function App() {
  return (
    <div className="flex h-[606px] w-[852px] flex-col overflow-hidden bg-[#d4d0c8] font-['Noto_Sans',sans-serif] text-[11px] leading-[13px] tracking-[-0.35px] text-black">
      <MenuBar />
      <FileBar />
      <ViewBar />
      <DraftBar />
      <div className="flex h-[480px] shrink-0">
        <ComboView />
        <Center />
        <PropertyView />
      </div>
      <StatusBar />
    </div>
  );
}
